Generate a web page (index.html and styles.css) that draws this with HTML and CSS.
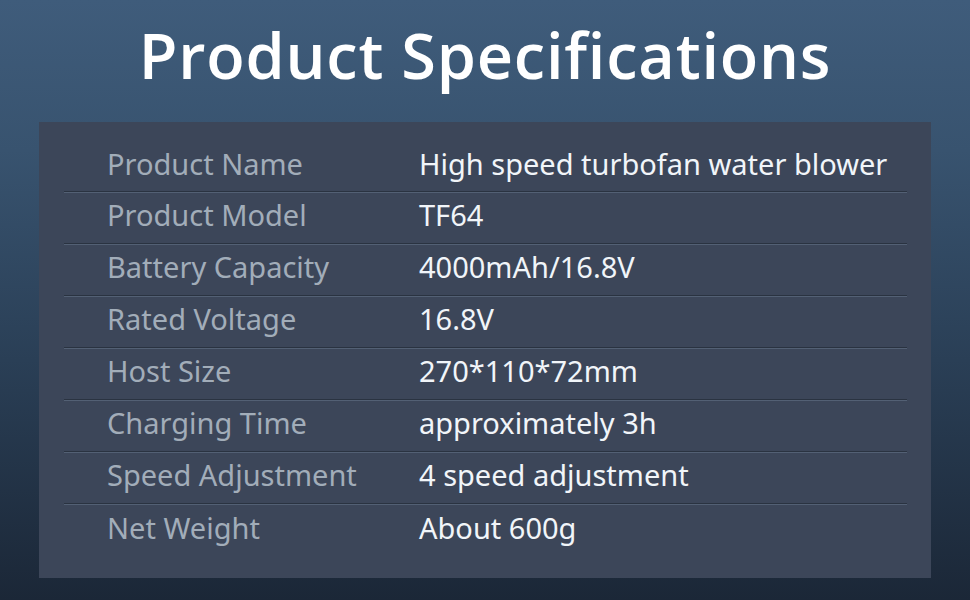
FILE: index.html
```html
<!DOCTYPE html>
<html lang="en">
<head>
<meta charset="utf-8">
<title>Product Specifications</title>
<link rel="stylesheet" href="styles.css">
</head>
<body>
<main class="page">
  <h1 class="title">Product Specifications</h1>
  <section class="panel">
    <div class="row"><span class="label">Product Name</span><span class="value">High speed turbofan water blower</span></div>
    <div class="row"><span class="label">Product Model</span><span class="value">TF64</span></div>
    <div class="row"><span class="label">Battery Capacity</span><span class="value">4000mAh/16.8V</span></div>
    <div class="row"><span class="label">Rated Voltage</span><span class="value">16.8V</span></div>
    <div class="row"><span class="label">Host Size</span><span class="value">270*110*72mm</span></div>
    <div class="row"><span class="label">Charging Time</span><span class="value">approximately 3h</span></div>
    <div class="row"><span class="label">Speed Adjustment</span><span class="value">4 speed adjustment</span></div>
    <div class="row"><span class="label">Net Weight</span><span class="value">About 600g</span></div>
  </section>
</main>
</body>
</html>
```
FILE: styles.css
```css
html, body {
  margin: 0;
  padding: 0;
}
body {
  width: 970px;
  height: 600px;
  overflow: hidden;
  background: linear-gradient(180deg, #3f5c7b 0%, #38536f 25%, #2a3f56 60%, #1b2737 100%);
  font-family: "Noto Sans", "Open Sans", sans-serif;
}
.page {
  display: flex;
  flex-direction: column;
  align-items: center;
}
.title {
  margin: 15px 0 0 0;
  height: 107px;
  font-family: "Open Sans", sans-serif;
  font-weight: 600;
  font-size: 63px;
  line-height: 80px;
  color: #ffffff;
  letter-spacing: 0.8px;
}
.panel {
  width: 892px;
  box-sizing: border-box;
  background: #3c4659;
  padding: 19px 24px 20px 25px;
  height: 456px;
}
.row {
  display: flex;
  align-items: center;
  height: 51px;
  padding-bottom: 6px;
  box-sizing: border-box;
  border-bottom: 1px solid #2a3341;
  box-shadow: 0 1px 0 #536074;
  font-size: 29px;
}
.row + .row {
  height: 52px;
}
.row:last-child {
  border-bottom: none;
  box-shadow: none;
}
.label {
  width: 312px;
  padding-left: 43px;
  color: #a2adb9;
}
.value {
  color: #f1f5f9;
}
```
